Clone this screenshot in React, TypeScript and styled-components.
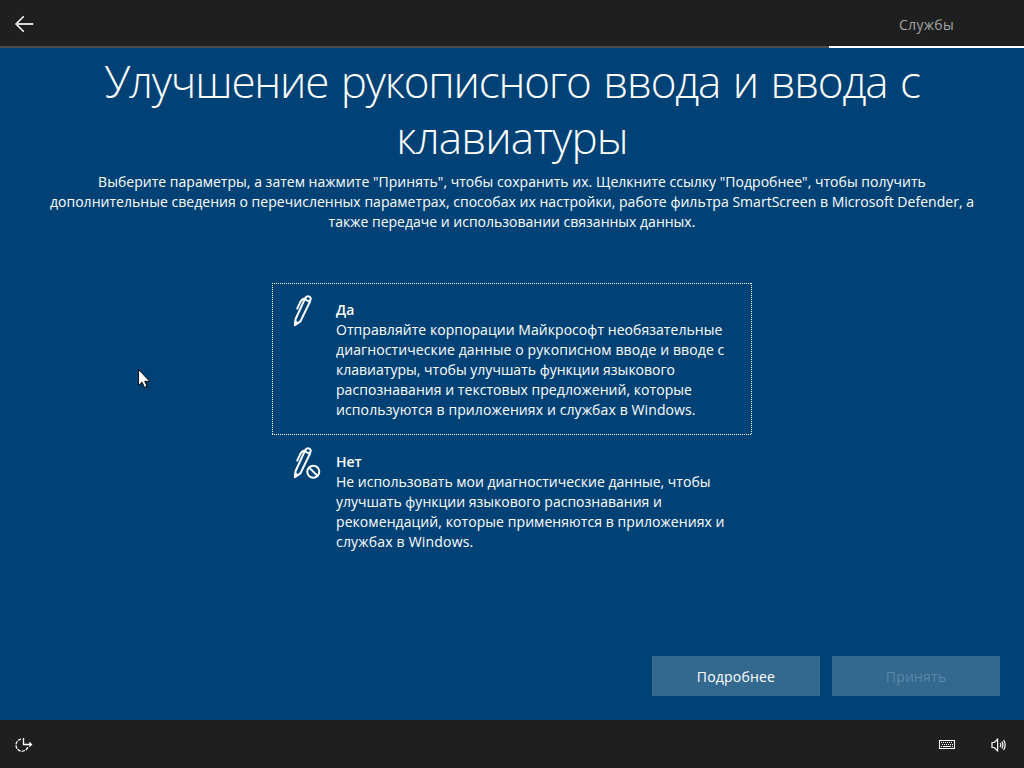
import React from 'react';
import styled, { createGlobalStyle, css } from 'styled-components';

const GlobalStyle = createGlobalStyle`
  * { box-sizing: border-box; }
  body {
    margin: 0;
    background: #004275;
    color: #fff;
    font-family: "Open Sans", "Noto Sans", sans-serif;
    font-size: 14px;
    line-height: 20px;
    overflow: hidden;
  }
`;

const Screen = styled.div`
  position: relative;
  display: flex;
  flex-direction: column;
  width: 1024px;
  height: 768px;
`;

const TopBar = styled.header`
  display: flex;
  justify-content: space-between;
  height: 48px;
  background: linear-gradient(#1f1f1f 46px, #4c4c4c 46px);
`;

const BackButton = styled.button`
  display: flex;
  width: 48px;
  height: 46px;
  padding: 0;
  border: 0;
  background: none;
`;

const Tab = styled.div`
  width: 195px;
  height: 48px;
  padding-top: 15px;
  border-bottom: 2px solid #fff;
  color: #a5a5a5;
  text-align: center;
  letter-spacing: 0.3px;
`;

const Main = styled.main`
  flex: 1;
  display: flex;
  flex-direction: column;
  align-items: center;
`;

const Title = styled.h1`
  margin: 5px 0 0;
  font-size: 44px;
  font-weight: 300;
  line-height: 56px;
  text-align: center;
`;

const Intro = styled.p`
  margin: 7px 0 0;
  text-align: center;
`;

const Line = styled.span<{ $track?: number; $word?: number }>`
  display: block;
  white-space: nowrap;
  letter-spacing: ${(p) => p.$track ?? 0}px;
  word-spacing: ${(p) => p.$word ?? 0}px;
`;

const Options = styled.div`
  display: flex;
  flex-direction: column;
  width: 480px;
  margin-top: 51px;
`;

const focusRing = css`
  background:
    repeating-linear-gradient(90deg, #fff 0 1px, transparent 1px 2px) 0 0 / 100% 1px no-repeat,
    repeating-linear-gradient(90deg, #fff 0 1px, transparent 1px 2px) 0 100% / 100% 1px no-repeat,
    repeating-linear-gradient(180deg, #fff 0 1px, transparent 1px 2px) 0 0 / 1px 100% no-repeat,
    repeating-linear-gradient(180deg, #fff 0 1px, transparent 1px 2px) 100% 0 / 1px 100% no-repeat;
`;

const Option = styled.section<{ $focused?: boolean }>`
  display: flex;
  gap: 12px;
  height: 152px;
  padding: 11px 0 0 20px;
  ${(p) => p.$focused && focusRing}
`;

const OptionText = styled.div`
  padding-top: 6px;
`;

const OptionTitle = styled.h2`
  margin: 0;
  font-size: 14px;
  font-weight: 600;
  line-height: 20px;
`;

const Actions = styled.div`
  display: flex;
  gap: 12px;
  align-self: flex-end;
  margin: auto 24px 24px 0;
`;

const ActionButton = styled.button`
  width: 168px;
  height: 40px;
  padding: 1px 0 0;
  border: 0;
  background: #33688f;
  color: #fff;
  font: inherit;
  letter-spacing: 0.2px;
  &:disabled { color: #5c87a6; }
`;

const BottomBar = styled.footer`
  display: flex;
  align-items: center;
  gap: 36px;
  height: 48px;
  padding: 2px 17px 0 15px;
  background: #1f1f1f;
`;

const Spacer = styled.div`
  flex: 1;
`;

const Cursor = styled.svg`
  position: absolute;
  left: 137px;
  top: 368px;
`;

type TextLine = [text: string, track: number];

const intro: TextLine[] = [
  ['Выберите параметры, а затем нажмите "Принять", чтобы сохранить их. Щелкните ссылку "Подробнее", чтобы получить', 0.02],
  ['дополнительные сведения о перечисленных параметрах, способах их настройки, работе фильтра SmartScreen в Microsoft Defender, а', 0.03],
  ['также передаче и использовании связанных данных.', 0],
];

const yesLines: TextLine[] = [
  ['Отправляйте корпорации Майкрософт необязательные', 0.05],
  ['диагностические данные о рукописном вводе и вводе с', 0.11],
  ['клавиатуры, чтобы улучшать функции языкового', 0.01],
  ['распознавания и текстовых предложений, которые', 0.05],
  ['используются в приложениях и службах в Windows.', 0.11],
];

const noLines: TextLine[] = [
  ['Не использовать мои диагностические данные, чтобы', 0],
  ['улучшать функции языкового распознавания и', 0.01],
  ['рекомендаций, которые применяются в приложениях и', 0.07],
  ['службах в Windows.', 0.19],
];

const Lines = ({ lines }: { lines: TextLine[] }) => (
  <>
    {lines.map(([text, track]) => (
      <Line key={text} $track={track}>{text}</Line>
    ))}
  </>
);

const PenIcon = ({ blocked }: { blocked?: boolean }) => (
  <svg width="32" height="36" viewBox="0 0 32 36" fill="none" stroke="#fff" strokeWidth="2" strokeLinejoin="round" strokeLinecap="round">
    <path d="M2.8 31.2 3.6 25 12.8 5.2 17.8 8 8.4 27.4Z" />
    <path d="M13.2 4.4 14.6 2.6Q17.8 1.6 18.8 4.4L17.8 7.6" />
    <path d="M5.2 14.6 8.6 7.4Q9.8 5.2 12.4 4.4" />
    <path d="M3.4 27.4 6 29" strokeWidth="1.6" />
    {blocked && (
      <>
        <circle cx="21.3" cy="25.7" r="8.4" fill="#004275" stroke="none" />
        <circle cx="21.3" cy="25.7" r="6" />
        <path d="M17.2 21.6 25.4 29.8" />
      </>
    )}
  </svg>
);

export default function App() {
  return (
    <Screen>
      <GlobalStyle />
      <TopBar>
        <BackButton aria-label="Назад">
          <svg width="48" height="46" viewBox="0 0 48 46" fill="none" stroke="#fff" strokeWidth="1.5">
            <path d="M23.8 16.2 16 24 23.8 31.8" />
            <path d="M16 24H33.3" stroke="#dcdcdc" strokeWidth="2" />
          </svg>
        </BackButton>
        <Tab>Службы</Tab>
      </TopBar>

      <Main>
        <Title>
          <Line $track={-1.2} $word={2.3}>Улучшение рукописного ввода и ввода с</Line>
          <Line $track={-0.85}>клавиатуры</Line>
        </Title>
        <Intro><Lines lines={intro} /></Intro>

        <Options>
          <Option $focused>
            <PenIcon />
            <OptionText>
              <OptionTitle>Да</OptionTitle>
              <Lines lines={yesLines} />
            </OptionText>
          </Option>
          <Option>
            <PenIcon blocked />
            <OptionText>
              <OptionTitle>Нет</OptionTitle>
              <Lines lines={noLines} />
            </OptionText>
          </Option>
        </Options>

        <Actions>
          <ActionButton>Подробнее</ActionButton>
          <ActionButton disabled>Принять</ActionButton>
        </Actions>
      </Main>

      <BottomBar>
        <svg width="20" height="18" viewBox="0 0 20 18" fill="none" stroke="#fff" strokeWidth="1.3">
          <path d="M12.8 11.2A6.1 6.1 0 1 1 6 3.1" strokeDasharray="3.4 1" />
          <path d="M8.5 2V8.5H16.5M14.3 6.4 16.5 8.5 14.3 10.6" />
        </svg>
        <Spacer />
        <svg width="16" height="10" viewBox="0 0 16 10" shapeRendering="crispEdges">
          <path d="M0.5 0.5H15.5V8.5H0.5Z" fill="none" stroke="#fff" />
          <path d="M2 2.5H14M3 4.5H14" stroke="#fff" strokeDasharray="1 1" />
          <path d="M2 6.5H3M4 6.5H12M13 6.5H14" stroke="#fff" />
        </svg>
        <svg width="16" height="14" viewBox="0 0 16 14" fill="none" stroke="#fff" strokeWidth="1.2">
          <path d="M1 4.5H3.2L6.6 1.2V12.8L3.2 9.5H1Z" />
          <path d="M9 5Q10.6 7 9 9M10.8 3.6Q13 7 10.8 10.4M12.6 2.2Q15.8 7 12.6 11.8" />
        </svg>
      </BottomBar>

      <Cursor width="16" height="22" viewBox="0 0 16 22">
        <path d="M3.5 3.5V19L7 15.7 9.4 21 11.8 20 9.5 15H14Z" fill="#002b50" opacity="0.6" />
        <path d="M1.5 1.5V17.6L5.1 14.2 7.5 19.4 10 18.3 7.7 13.3H12.7Z" fill="#fff" stroke="#000" strokeWidth="0.9" />
      </Cursor>
    </Screen>
  );
}
